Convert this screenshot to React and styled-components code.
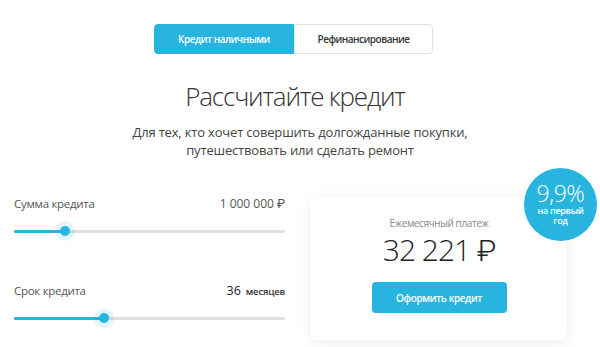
import React from 'react'
import styled, { createGlobalStyle } from 'styled-components'

const accent = '#27b5e0'

const Global = createGlobalStyle`
    html, body {
        margin: 0;
        padding: 0;
        background: #fff;
        font-family: "Open Sans", Roboto, "Liberation Sans", sans-serif;
        color: #333;
    }
`

const Page = styled.div`
    width: 600px;
    height: 347px;
    overflow: hidden;
    padding: 24px 14px 0;
    box-sizing: border-box;
`

const Tabs = styled.div`
    display: flex;
    justify-content: center;
    padding-right: 13px;
`

const Tab = styled.button`
    width: ${p => p.w}px;
    height: 30px;
    border: 1px solid ${p => (p.active ? accent : '#e2e2e2')};
    background: ${p => (p.active ? accent : '#fff')};
    color: ${p => (p.active ? '#fff' : '#333')};
    font-family: inherit;
    font-size: 10px;
    letter-spacing: -0.5px;
    font-weight: 600;
    padding: 0;
    border-radius: ${p => (p.active ? '4px 0 0 4px' : '0 4px 4px 0')};
`

const Title = styled.h1`
    margin: 24px 0 0;
    font-size: 26px;
    letter-spacing: -1.2px;
    line-height: 36px;
    font-weight: 300;
    text-align: center;
    color: #333;
    padding-right: 10px;
`

const Subtitle = styled.p`
    margin: 9px 0 0;
    font-size: 13px;
    letter-spacing: -0.18px;
    line-height: 18px;
    text-align: center;
    color: #444;
`

const Row = styled.div`
    display: flex;
    align-items: flex-start;
    gap: 26px;
    margin-top: 36px;
`

const Sliders = styled.div`
    width: 271px;
    display: flex;
    flex-direction: column;
`

const Field = styled.div`
    & + & {
        margin-top: 41px;
    }
`

const FieldHead = styled.div`
    display: flex;
    justify-content: space-between;
    align-items: baseline;
    height: 18px;
    line-height: 18px;
    font-size: 11.5px;
    letter-spacing: -0.3px;
    color: #555;
`

const Value = styled.span`
    color: ${p => (p.dark ? '#222' : '#555')};
    font-size: ${p => (p.dark ? '12.5px' : '12px')};
    letter-spacing: 0;
`

const Unit = styled.span`
    font-size: 9.5px;
    font-weight: 600;
    letter-spacing: -0.2px;
    color: #333;
    margin-left: 5px;
`

const Track = styled.div`
    position: relative;
    height: 20px;
    margin-top: 8px;
    &::before {
        content: "";
        position: absolute;
        left: 0;
        right: 0;
        top: 9px;
        height: 3px;
        border-radius: 2px;
        background: #e0e0e0;
    }
`

const Fill = styled.div`
    position: absolute;
    left: 0;
    top: 9px;
    height: 3px;
    border-radius: 2px;
    background: ${accent};
`

const Thumb = styled.div`
    position: absolute;
    top: 0;
    width: 20px;
    height: 20px;
    margin-left: -10px;
    border-radius: 50%;
    background: rgba(39, 181, 224, 0.14);
    &::after {
        content: "";
        position: absolute;
        left: 5px;
        top: 5px;
        width: 10px;
        height: 10px;
        border-radius: 50%;
        background: ${accent};
    }
`

const Card = styled.div`
    position: relative;
    width: 256px;
    margin-top: 2px;
    padding: 18px 0 27px;
    box-sizing: border-box;
    background: #fff;
    border-radius: 4px;
    box-shadow: 0 2px 14px rgba(0, 0, 0, 0.08);
    display: flex;
    flex-direction: column;
    align-items: center;
`

const CardLabel = styled.div`
    font-size: 10px;
    letter-spacing: -0.4px;
    line-height: 16px;
    color: #888;
`

const Amount = styled.div`
    margin-top: 1px;
    font-size: 30px;
    letter-spacing: -1px;
    line-height: 36px;
    font-weight: 300;
    color: #222;
`

const Cta = styled.button`
    margin-top: 14px;
    width: 135px;
    height: 31px;
    border: none;
    border-radius: 4px;
    background: ${accent};
    color: #fff;
    font-family: inherit;
    font-size: 10px;
    letter-spacing: -0.4px;
    font-weight: 600;
`

const Badge = styled.div`
    position: absolute;
    top: -29px;
    right: -30px;
    width: 73px;
    height: 73px;
    border-radius: 50%;
    background: ${accent};
    color: #fff;
    display: flex;
    flex-direction: column;
    align-items: center;
    justify-content: center;
    text-align: center;
`

const Rate = styled.div`
    font-size: 23px;
    letter-spacing: -0.5px;
    line-height: 25px;
    font-weight: 300;
    margin-top: -3px;
`

const RateNote = styled.div`
    font-size: 9px;
    letter-spacing: -0.3px;
    line-height: 10px;
    font-weight: 600;
`

function Slider({ label, value, percent }) {
    return (
        <Field>
            <FieldHead>
                <span>{label}</span>
                {value}
            </FieldHead>
            <Track>
                <Fill style={{ width: percent + '%' }} />
                <Thumb style={{ left: percent + '%' }} />
            </Track>
        </Field>
    )
}

export default function App() {
    return (
        <Page>
            <Global />
            <Tabs>
                <Tab active w={140}>Кредит наличными</Tab>
                <Tab w={139}>Рефинансирование</Tab>
            </Tabs>
            <Title>Рассчитайте кредит</Title>
            <Subtitle>
                Для тех, кто хочет совершить долгожданные покупки,<br />
                путешествовать или сделать ремонт
            </Subtitle>
            <Row>
                <Sliders>
                    <Slider label="Сумма кредита" percent={18.8} value={<Value>1 000 000 ₽</Value>} />
                    <Slider
                        label="Срок кредита"
                        percent={33.2}
                        value={<Value dark>36<Unit>месяцев</Unit></Value>}
                    />
                </Sliders>
                <Card>
                    <CardLabel>Ежемесячный платеж</CardLabel>
                    <Amount>32 221 ₽</Amount>
                    <Cta>Оформить кредит</Cta>
                    <Badge>
                        <Rate>9,9%</Rate>
                        <RateNote>на первый<br />год</RateNote>
                    </Badge>
                </Card>
            </Row>
        </Page>
    )
}
